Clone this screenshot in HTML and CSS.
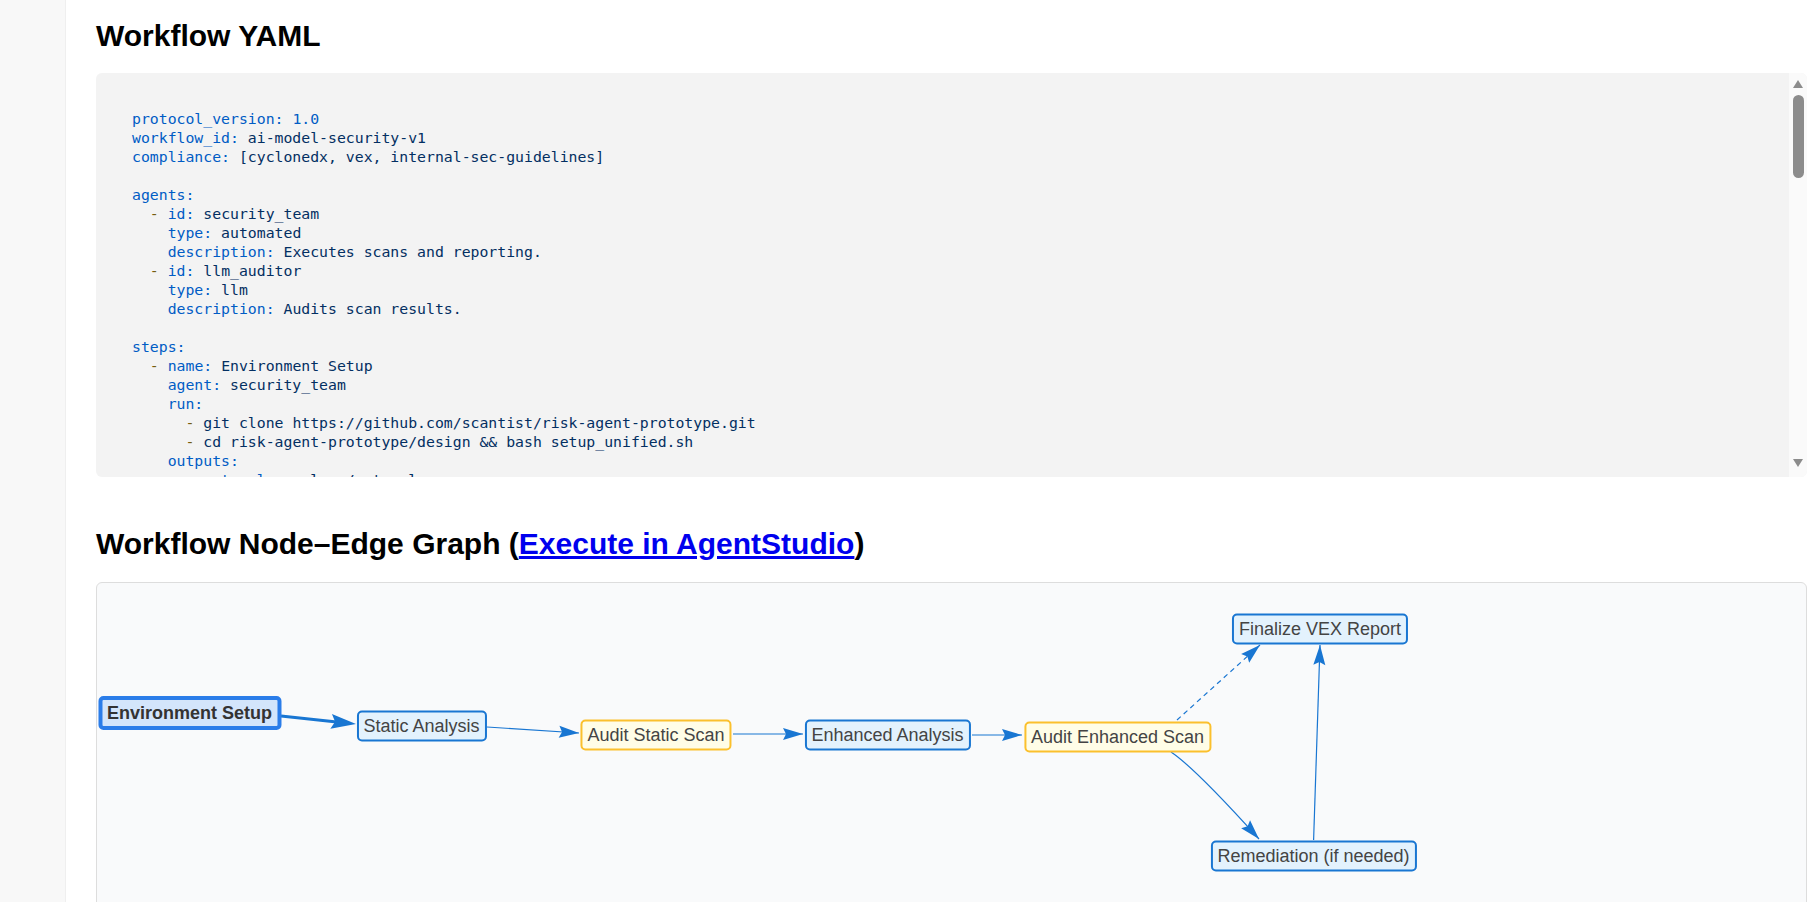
FILE: index.html
```html
<!DOCTYPE html>
<html lang="en">
<head>
<meta charset="utf-8">
<title>Workflow</title>
<link rel="stylesheet" href="styles.css">
</head>
<body>
<div class="layout">
  <aside class="sidebar"></aside>
  <main class="main">
    <h2 class="section-title">Workflow YAML</h2>
    <div class="code-wrap">
    <pre class="code"><code><span class="k">protocol_version:</span> <span class="n">1.0</span>
<span class="k">workflow_id:</span> <span class="s">ai-model-security-v1</span>
<span class="k">compliance:</span> <span class="s">[cyclonedx, vex, internal-sec-guidelines]</span>

<span class="k">agents:</span>
  <span class="b">-</span> <span class="k">id:</span> <span class="s">security_team</span>
    <span class="k">type:</span> <span class="s">automated</span>
    <span class="k">description:</span> <span class="s">Executes scans and reporting.</span>
  <span class="b">-</span> <span class="k">id:</span> <span class="s">llm_auditor</span>
    <span class="k">type:</span> <span class="s">llm</span>
    <span class="k">description:</span> <span class="s">Audits scan results.</span>

<span class="k">steps:</span>
  <span class="b">-</span> <span class="k">name:</span> <span class="s">Environment Setup</span>
    <span class="k">agent:</span> <span class="s">security_team</span>
    <span class="k">run:</span>
      <span class="b">-</span> <span class="s">git clone https://github.com/scantist/risk-agent-prototype.git</span>
      <span class="b">-</span> <span class="s">cd risk-agent-prototype/design &amp;&amp; bash setup_unified.sh</span>
    <span class="k">outputs:</span>
      <span class="b">-</span> <span class="k">setup_logs:</span> <span class="s">logs/setup.log</span>

  <span class="b">-</span> <span class="k">name:</span> <span class="s">Static Analysis</span>
    <span class="k">agent:</span> <span class="s">security_team</span>
    <span class="k">depends_on:</span> <span class="s">[Environment Setup]</span>
    <span class="k">run:</span>
      <span class="b">-</span> <span class="s">bash run_static_analysis.sh --target ./models</span>
    <span class="k">outputs:</span>
      <span class="b">-</span> <span class="k">static_report:</span> <span class="s">reports/static_scan.json</span>

  <span class="b">-</span> <span class="k">name:</span> <span class="s">Audit Static Scan</span>
    <span class="k">agent:</span> <span class="s">llm_auditor</span>
    <span class="k">depends_on:</span> <span class="s">[Static Analysis]</span>
    <span class="k">inputs:</span>
      <span class="b">-</span> <span class="s">reports/static_scan.json</span>
    <span class="k">prompt:</span> <span class="s">Review static findings and flag false positives.</span>
    <span class="k">outputs:</span>
      <span class="b">-</span> <span class="k">static_audit:</span> <span class="s">reports/static_audit.md</span>

  <span class="b">-</span> <span class="k">name:</span> <span class="s">Enhanced Analysis</span>
    <span class="k">agent:</span> <span class="s">security_team</span>
    <span class="k">depends_on:</span> <span class="s">[Audit Static Scan]</span>
    <span class="k">run:</span>
      <span class="b">-</span> <span class="s">bash run_enhanced_analysis.sh --sbom cyclonedx</span>
    <span class="k">outputs:</span>
      <span class="b">-</span> <span class="k">enhanced_report:</span> <span class="s">reports/enhanced_scan.json</span>
      <span class="b">-</span> <span class="k">sbom:</span> <span class="s">reports/sbom.cdx.json</span>

  <span class="b">-</span> <span class="k">name:</span> <span class="s">Audit Enhanced Scan</span>
    <span class="k">agent:</span> <span class="s">llm_auditor</span>
    <span class="k">depends_on:</span> <span class="s">[Enhanced Analysis]</span>
    <span class="k">inputs:</span>
      <span class="b">-</span> <span class="s">reports/enhanced_scan.json</span>
      <span class="b">-</span> <span class="s">reports/sbom.cdx.json</span>
    <span class="k">prompt:</span> <span class="s">Assess exploitability and assign VEX status.</span>
    <span class="k">outputs:</span>
      <span class="b">-</span> <span class="k">enhanced_audit:</span> <span class="s">reports/enhanced_audit.md</span>
    <span class="k">branches:</span>
      <span class="b">-</span> <span class="k">condition:</span> <span class="s">no_critical_findings</span>
        <span class="k">next:</span> <span class="s">Finalize VEX Report</span>
      <span class="b">-</span> <span class="k">condition:</span> <span class="s">critical_findings</span>
        <span class="k">next:</span> <span class="s">Remediation (if needed)</span>

  <span class="b">-</span> <span class="k">name:</span> <span class="s">Remediation (if needed)</span>
    <span class="k">agent:</span> <span class="s">security_team</span>
    <span class="k">depends_on:</span> <span class="s">[Audit Enhanced Scan]</span>
    <span class="k">when:</span> <span class="s">critical_findings</span>
    <span class="k">run:</span>
      <span class="b">-</span> <span class="s">bash apply_remediation.sh --input reports/enhanced_audit.md</span>
    <span class="k">outputs:</span>
      <span class="b">-</span> <span class="k">remediation_log:</span> <span class="s">logs/remediation.log</span>

  <span class="b">-</span> <span class="k">name:</span> <span class="s">Finalize VEX Report</span>
    <span class="k">agent:</span> <span class="s">security_team</span>
    <span class="k">depends_on:</span> <span class="s">[Audit Enhanced Scan, Remediation (if needed)]</span>
    <span class="k">run:</span>
      <span class="b">-</span> <span class="s">bash generate_vex.sh --format cyclonedx</span>
    <span class="k">outputs:</span>
      <span class="b">-</span> <span class="k">vex_report:</span> <span class="s">reports/vex.json</span>

<span class="k">policies:</span>
  <span class="k">retries:</span> <span class="n">2</span>
  <span class="k">timeout_minutes:</span> <span class="n">60</span>
  <span class="k">on_failure:</span> <span class="s">notify</span>

<span class="k">notifications:</span>
  <span class="b">-</span> <span class="k">channel:</span> <span class="s">slack</span>
    <span class="k">target:</span> <span class="s">"#security-alerts"</span>
  <span class="b">-</span> <span class="k">channel:</span> <span class="s">email</span>
    <span class="k">target:</span> <span class="s">security@example.com</span>

<span class="k">metadata:</span>
  <span class="k">owner:</span> <span class="s">security_team</span>
  <span class="k">version:</span> <span class="s">1.0.0</span></code></pre>
      <div class="vscroll" aria-hidden="true">
        <span class="vscroll-up"></span>
        <span class="vscroll-thumb"></span>
        <span class="vscroll-down"></span>
      </div>
    </div>

    <h2 class="section-title graph-title">Workflow Node–Edge Graph (<a class="studio-link" href="#">Execute in AgentStudio</a>)</h2>
    <div class="graph">
      <svg class="edges" xmlns="http://www.w3.org/2000/svg">
        <defs>
          <marker id="arr" viewBox="-22 -7 24 14" refX="0" refY="0" markerWidth="24" markerHeight="14" markerUnits="userSpaceOnUse" orient="auto">
            <path d="M0,0 L-20,-6 L-17,0 L-20,6 Z" fill="#1976d2"/>
          </marker>
          <marker id="arrBig" viewBox="-30 -10 45 20" refX="-10" refY="0" markerWidth="45" markerHeight="20" markerUnits="userSpaceOnUse" orient="auto">
            <path d="M0,0 L-25,-7.5 L-21,0 L-25,7.5 Z" fill="#1976d2"/>
          </marker>
        </defs>
        <path class="edge thick" d="M184,133 L249.06,139.94" marker-end="url(#arrBig)"/>
        <path class="edge" d="M390,144 L482,150" marker-end="url(#arr)"/>
        <path class="edge" d="M636,151 L706,151" marker-end="url(#arr)"/>
        <path class="edge" d="M875,152 L925,152" marker-end="url(#arr)"/>
        <path class="edge dashed" d="M1080,137 L1163,62" marker-end="url(#arr)"/>
        <path class="edge" d="M1074,169 Q1098,185 1162,256" marker-end="url(#arr)"/>
        <path class="edge" d="M1216.6,257 L1223,62" marker-end="url(#arr)"/>
      </svg>
      <div class="node start" style="left:92.5px;top:130px">Environment Setup</div>
      <div class="node" style="left:324.5px;top:142.5px">Static Analysis</div>
      <div class="node audit" style="left:559px;top:151.5px">Audit Static Scan</div>
      <div class="node" style="left:790.5px;top:152px">Enhanced Analysis</div>
      <div class="node audit" style="left:1020.5px;top:153.5px">Audit Enhanced Scan</div>
      <div class="node" style="left:1223px;top:45.5px">Finalize VEX Report</div>
      <div class="node" style="left:1216.5px;top:272.5px">Remediation (if needed)</div>
    </div>
  </main>
</div>
</body>
</html>
```

FILE: styles.css
```css
* { box-sizing: border-box; }

html, body {
  margin: 0;
  height: 100%;
}

body {
  font-family: "Liberation Sans", Arial, sans-serif;
  background: #ffffff;
  color: #000000;
  overflow: hidden;
}

.layout {
  display: flex;
  min-height: 100vh;
}

.sidebar {
  width: 66px;
  flex: none;
  background: #f8f8f8;
  border-right: 1px solid #efefef;
}

.main {
  flex: 1;
  min-width: 0;
  padding: 0 13px 0 30px;
}

.section-title {
  font-size: 30px;
  line-height: 34px;
  font-weight: bold;
  margin: 19px 0 20px;
}

.graph-title {
  margin: 50px 0 21px;
}

.studio-link {
  color: #0000ee;
  text-decoration: underline;
}

.code-wrap {
  position: relative;
}

.code {
  margin: 0;
  height: 404px;
  overflow: auto;
  scrollbar-width: none;
  background: #f3f3f3;
  border-radius: 6px;
  padding: 36px 34px 16px 36px;
  font-family: "DejaVu Sans Mono", monospace;
  font-size: 14.8px;
  line-height: 19px;
  color: #24292e;
}

.code::-webkit-scrollbar {
  display: none;
}

.code code {
  font-family: inherit;
  font-size: inherit;
}

.k, .n { color: #005cc5; }
.s { color: #032f62; }
.b { color: #735c0f; }

/* scrollbar drawn over the right edge of the code block */
.vscroll {
  position: absolute;
  top: 0;
  right: 0;
  bottom: 0;
  width: 18px;
  background: #fafafa;
  border-radius: 0 6px 6px 0;
}

.vscroll-up,
.vscroll-down {
  position: absolute;
  left: 4px;
  width: 0;
  height: 0;
  border-left: 5.5px solid transparent;
  border-right: 5.5px solid transparent;
}

.vscroll-up {
  top: 7px;
  border-bottom: 8px solid #8c8c8c;
}

.vscroll-down {
  bottom: 10px;
  border-top: 8px solid #8c8c8c;
}

.vscroll-thumb {
  position: absolute;
  left: 4px;
  top: 22px;
  width: 11px;
  height: 83px;
  border-radius: 6px;
  background: #8c8c8c;
}

.graph {
  position: relative;
  height: 520px;
  background: #f9fafb;
  border: 1px solid #dddddd;
  border-radius: 6px;
}

.edges {
  position: absolute;
  left: 0;
  top: 0;
  width: 100%;
  height: 100%;
  overflow: visible;
}

.edge {
  fill: none;
  stroke: #1976d2;
  stroke-width: 1.2;
}

.edge.thick {
  stroke-width: 3;
}

.edge.dashed {
  stroke-dasharray: 5 4;
}

.node {
  position: absolute;
  transform: translate(-50%, -50%);
  white-space: nowrap;
  font-size: 18px;
  line-height: 21px;
  padding: 3px 5px;
  border: 2px solid #1976d2;
  background: #e3f2fd;
  color: #444444;
  border-radius: 5px;
}

.node.audit {
  border-color: #fbc02d;
  background: #fffde7;
}

.node.start {
  border-width: 4px;
  border-color: #2b7de9;
  background: #d3e5fb;
  font-weight: bold;
  color: #333333;
  padding: 2px 5px;
  line-height: 22px;
}
```
